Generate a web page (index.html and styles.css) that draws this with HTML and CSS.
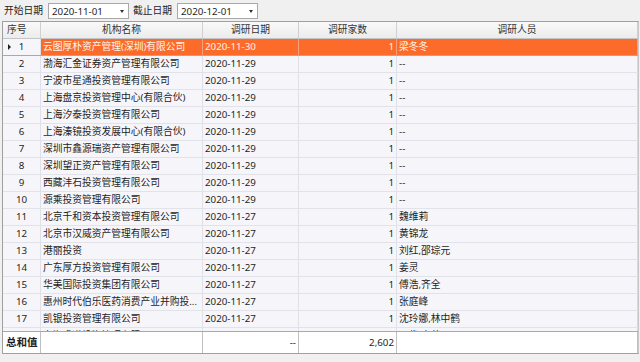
FILE: index.html
```html
<!DOCTYPE html>
<html lang="zh">
<head>
<meta charset="utf-8">
<link rel="stylesheet" href="styles.css">
</head>
<body>
<div class="toolbar">
  <span class="label">开始日期</span>
  <div class="datebox"><span>2020-11-01</span><span class="arrow"></span></div>
  <span class="label">截止日期</span>
  <div class="datebox"><span>2020-12-01</span><span class="arrow"></span></div>
</div>
<div class="grid">
  <div class="row head">
    <div class="c c1 left">序号</div>
    <div class="c c2 center">机构名称</div>
    <div class="c c3 center">调研日期</div>
    <div class="c c4 center">调研家数</div>
    <div class="c c5 center">调研人员</div>
  </div>
  <div class="body">
    <div class="row sel"><div class="c c1 num"><span class="ind"></span>1</div><div class="c c2">云图厚朴资产管理(深圳)有限公司</div><div class="c c3">2020-11-30</div><div class="c c4 right">1</div><div class="c c5">梁冬冬</div></div>
    <div class="row"><div class="c c1 num">2</div><div class="c c2">渤海汇金证券资产管理有限公司</div><div class="c c3">2020-11-29</div><div class="c c4 right">1</div><div class="c c5">--</div></div>
    <div class="row"><div class="c c1 num">3</div><div class="c c2">宁波市星通投资管理有限公司</div><div class="c c3">2020-11-29</div><div class="c c4 right">1</div><div class="c c5">--</div></div>
    <div class="row"><div class="c c1 num">4</div><div class="c c2">上海盘京投资管理中心(有限合伙)</div><div class="c c3">2020-11-29</div><div class="c c4 right">1</div><div class="c c5">--</div></div>
    <div class="row"><div class="c c1 num">5</div><div class="c c2">上海汐泰投资管理有限公司</div><div class="c c3">2020-11-29</div><div class="c c4 right">1</div><div class="c c5">--</div></div>
    <div class="row"><div class="c c1 num">6</div><div class="c c2">上海溱镜投资发展中心(有限合伙)</div><div class="c c3">2020-11-29</div><div class="c c4 right">1</div><div class="c c5">--</div></div>
    <div class="row"><div class="c c1 num">7</div><div class="c c2">深圳市鑫源瑞资产管理有限公司</div><div class="c c3">2020-11-29</div><div class="c c4 right">1</div><div class="c c5">--</div></div>
    <div class="row"><div class="c c1 num">8</div><div class="c c2">深圳望正资产管理有限公司</div><div class="c c3">2020-11-29</div><div class="c c4 right">1</div><div class="c c5">--</div></div>
    <div class="row"><div class="c c1 num">9</div><div class="c c2">西藏沣石投资管理有限公司</div><div class="c c3">2020-11-29</div><div class="c c4 right">1</div><div class="c c5">--</div></div>
    <div class="row"><div class="c c1 num">10</div><div class="c c2">源乘投资管理有限公司</div><div class="c c3">2020-11-29</div><div class="c c4 right">1</div><div class="c c5">--</div></div>
    <div class="row"><div class="c c1 num">11</div><div class="c c2">北京千和资本投资管理有限公司</div><div class="c c3">2020-11-27</div><div class="c c4 right">1</div><div class="c c5">魏维莉</div></div>
    <div class="row"><div class="c c1 num">12</div><div class="c c2">北京市汉威资产管理有限公司</div><div class="c c3">2020-11-27</div><div class="c c4 right">1</div><div class="c c5">黄锦龙</div></div>
    <div class="row"><div class="c c1 num">13</div><div class="c c2">港丽投资</div><div class="c c3">2020-11-27</div><div class="c c4 right">1</div><div class="c c5">刘红,邵琮元</div></div>
    <div class="row"><div class="c c1 num">14</div><div class="c c2">广东厚方投资管理有限公司</div><div class="c c3">2020-11-27</div><div class="c c4 right">1</div><div class="c c5">姜灵</div></div>
    <div class="row"><div class="c c1 num">15</div><div class="c c2">华美国际投资集团有限公司</div><div class="c c3">2020-11-27</div><div class="c c4 right">1</div><div class="c c5">傅浩,齐全</div></div>
    <div class="row"><div class="c c1 num">16</div><div class="c c2">惠州时代伯乐医药消费产业并购投...</div><div class="c c3">2020-11-27</div><div class="c c4 right">1</div><div class="c c5">张庭峰</div></div>
    <div class="row"><div class="c c1 num">17</div><div class="c c2">凯银投资管理有限公司</div><div class="c c3">2020-11-27</div><div class="c c4 right">1</div><div class="c c5">沈玲娜,林中鹤</div></div>
    <div class="row"><div class="c c1 num">18</div><div class="c c2">上海睿道投资管理有限公司</div><div class="c c3">2020-11-27</div><div class="c c4 right">1</div><div class="c c5">王俊,李萌</div></div>
  </div>
  <div class="row foot">
    <div class="c c1 total">总和值</div>
    <div class="c c2"></div>
    <div class="c c3 right">--</div>
    <div class="c c4 right">2,602</div>
    <div class="c c5"></div>
  </div>
</div>
</body>
</html>
```
FILE: styles.css
```css
html, body {
  margin: 0;
  padding: 0;
  background: #f0f0f0;
}
body {
  font-family: "Noto Sans", "Noto Sans CJK SC", sans-serif;
  font-size: 9.75px;
  color: #1e1e1e;
  width: 640px;
  height: 362px;
  overflow: hidden;
}
.toolbar {
  height: 21px;
  display: flex;
  align-items: center;
  padding-left: 4px;
  box-sizing: border-box;
}
.label {
  margin-right: 5px;
  line-height: 16px;
}
.datebox {
  width: 81px;
  height: 16px;
  box-sizing: border-box;
  background: #fff;
  border: 1px solid #a9a9a9;
  display: flex;
  align-items: center;
  justify-content: space-between;
  padding: 0 4px 0 3px;
  margin-right: 4px;
  margin-top: 1px;
}
.arrow {
  width: 0;
  height: 0;
  border-left: 2.5px solid transparent;
  border-right: 2.5px solid transparent;
  border-top: 3px solid #333;
}
.grid {
  margin-left: 2px;
  width: 637px;
  border: 1px solid #a0a0a0;
  border-right-color: #c8c8c8;
  box-sizing: border-box;
  background: #fff;
}
.row {
  display: grid;
  grid-template-columns: 38px 162px 96px 98px 241px;
  height: 17px;
  box-sizing: border-box;
  border-bottom: 1px solid #e2e2ea;
  background: #f6f6fa;
}
.c {
  border-right: 1px solid #e0e0e8;
  padding: 0 2px;
  line-height: 16px;
  white-space: nowrap;
  overflow: hidden;
}
.c5 { border-right-color: #d8d8d8; }
.center { text-align: center; }
.left { text-align: left; padding-left: 4px; }
.right { text-align: right; }
.num { text-align: center; position: relative; }
.ind {
  position: absolute;
  left: 5px;
  top: 5px;
  width: 0;
  height: 0;
  border-top: 3px solid transparent;
  border-bottom: 3px solid transparent;
  border-left: 3px solid #222;
}
.head {
  background: linear-gradient(#f9f9f9, #ececec);
  border-bottom: 1px solid #c4c4c4;
  height: 17px;
}
.head .c {
  border-right-color: #d0d0d0;
  color: #333;
}
.body {
  height: 292px;
  overflow: hidden;
}
.sel {
  background: #fd6b2a;
  border-bottom-color: #f09070;
  color: #fff4ea;
}
.sel .c { border-right-color: #f5a07a; }
.sel .c1 { background: #f6f6fa; color: #1e1e1e; border-right-color: #e0e0e8; }
.foot {
  height: 22px;
  border-top: 1px solid #a8a8a8;
  border-bottom: none;
  background: #fff;
}
.foot .c {
  line-height: 21px;
  border-right-color: #c0c0c0;
}
.total {
  font-weight: bold;
  font-size: 10.5px;
  padding-left: 3px;
}
```
